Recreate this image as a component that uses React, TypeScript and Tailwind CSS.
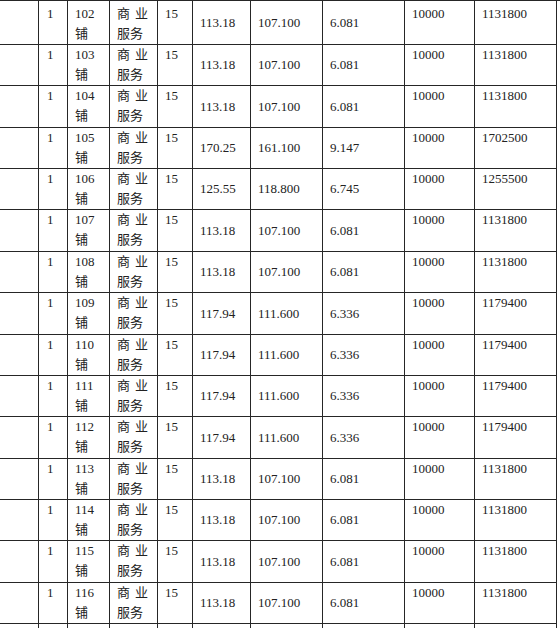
import React from 'react';

// 商铺价格表（截图片段）
type Row = {
  no: string;
  area: string;
  inner: string;
  share: string;
  price: string;
  total: string;
};

const A = { area: '113.18', inner: '107.100', share: '6.081', price: '10000', total: '1131800' };
const B = { area: '117.94', inner: '111.600', share: '6.336', price: '10000', total: '1179400' };

const rows: Row[] = [
  { no: '102', ...A },
  { no: '103', ...A },
  { no: '104', ...A },
  { no: '105', area: '170.25', inner: '161.100', share: '9.147', price: '10000', total: '1702500' },
  { no: '106', area: '125.55', inner: '118.800', share: '6.745', price: '10000', total: '1255500' },
  { no: '107', ...A },
  { no: '108', ...A },
  { no: '109', ...B },
  { no: '110', ...B },
  { no: '111', ...B },
  { no: '112', ...B },
  { no: '113', ...A },
  { no: '114', ...A },
  { no: '115', ...A },
  { no: '116', ...A },
];

// 每行高度（含下边框），按截图量出
const heights = [44, 41, 42, 41, 41, 42, 41, 42, 41, 41, 42, 41, 41, 42, 41];

const cols = 'grid grid-cols-[40px_29px_42px_48px_35px_58px_72px_82px_70px_82px] leading-[20px]';
const cell = 'border-r border-b border-[#262626] px-[7px]';

function TableRow({ row, height, first }: { row: Row; height: number; first: boolean }) {
  const pt = first ? 'pt-[3px]' : 'pt-0';
  return (
    <div className={cols} style={{ height }}>
      <div className={`${cell} border-l`} />
      <div className={`${cell} ${pt} pl-[8px]`}>1</div>
      <div className={`${cell} ${pt}`}>
        <div>{row.no}</div>
        <div>铺</div>
      </div>
      <div className={`${cell} ${pt}`}>
        <div className="flex w-[31px] justify-between">
          <span>商</span>
          <span>业</span>
        </div>
        <div>服务</div>
      </div>
      <div className={`${cell} ${pt}`}>15</div>
      <div className={`${cell} flex items-center`}>{row.area}</div>
      <div className={`${cell} flex items-center`}>{row.inner}</div>
      <div className={`${cell} flex items-center`}>{row.share}</div>
      <div className={`${cell} ${pt}`}>{row.price}</div>
      <div className={`${cell} ${pt}`}>{row.total}</div>
    </div>
  );
}

export default function App() {
  return (
    <div className="h-[628px] w-[560px] overflow-hidden bg-white">
      <div
        className="-ml-px border-t border-[#262626] text-[13px] text-[#222]"
        style={{ fontFamily: '"Liberation Serif", "Noto Sans CJK SC", serif' }}
      >
        {rows.map((r, i) => (
          <TableRow key={r.no} row={r} height={heights[i]} first={i === 0} />
        ))}
        {/* 下一行只露出竖线 */}
        <div className={`${cols} h-[41px]`}>
          {Array.from({ length: 10 }).map((_, i) => (
            <div key={i} className={`${cell} ${i === 0 ? 'border-l' : ''}`} />
          ))}
        </div>
      </div>
    </div>
  );
}
